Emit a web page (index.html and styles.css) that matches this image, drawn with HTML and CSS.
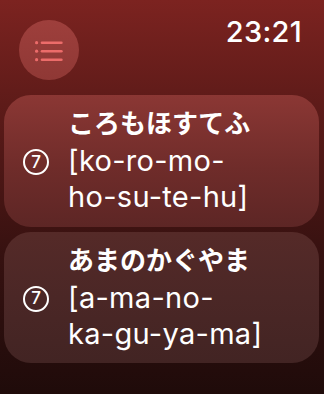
FILE: index.html
```html
<!DOCTYPE html>
<html lang="ja">
<head>
<meta charset="utf-8">
<link rel="stylesheet" href="styles.css">
</head>
<body>
<div class="screen">
  <header class="top">
    <div class="menu-btn">
      <svg width="30" height="22" viewBox="0 0 30 22">
        <circle cx="2.6" cy="2.7" r="1.6" fill="#ec6c6a"/>
        <circle cx="2.6" cy="11.2" r="1.6" fill="#ec6c6a"/>
        <circle cx="2.6" cy="19.7" r="1.6" fill="#ec6c6a"/>
        <rect x="6.7" y="1.5" width="22" height="2.5" rx="1.25" fill="#ec6c6a"/>
        <rect x="6.7" y="10" width="22" height="2.5" rx="1.25" fill="#ec6c6a"/>
        <rect x="6.7" y="18.5" width="22" height="2.5" rx="1.25" fill="#ec6c6a"/>
      </svg>
    </div>
    <div class="time">23:21</div>
  </header>
  <div class="list">
    <div class="card card-a">
      <div class="badge"><span>7</span></div>
      <div class="text">
        <div class="title">ころもほすてふ</div>
        <div class="romaji">[ko-ro-mo-<br>ho-su-te-hu]</div>
      </div>
    </div>
    <div class="card card-b">
      <div class="badge"><span>7</span></div>
      <div class="text">
        <div class="title">あまのかぐやま</div>
        <div class="romaji">[a-ma-no-<br>ka-gu-ya-ma]</div>
      </div>
    </div>
  </div>
</div>
</body>
</html>
```
FILE: styles.css
```css
html, body {
  margin: 0;
  padding: 0;
}
body {
  width: 324px;
  height: 394px;
  overflow: hidden;
  font-family: Inter, "Noto Sans CJK JP", sans-serif;
  color: #fff;
}
.screen {
  width: 324px;
  height: 394px;
  background: linear-gradient(180deg, #7c2320 0%, #5a1a18 30%, #361110 65%, #1f0b0a 100%);
  display: flex;
  flex-direction: column;
}
.top {
  display: flex;
  justify-content: space-between;
  align-items: flex-start;
  height: 95px;
  box-sizing: border-box;
  padding: 20px 22px 0 19px;
}
.menu-btn {
  width: 60px;
  height: 60px;
  border-radius: 50%;
  background: linear-gradient(180deg, #9e3f3c 0%, #8f3835 100%);
  display: flex;
  align-items: center;
  justify-content: center;
}
.menu-btn svg {
  margin-top: 2px;
}
.time {
  font-size: 29px;
  font-weight: 500;
  line-height: 1;
  margin-top: -3px;
  letter-spacing: 0.3px;
}
.list {
  display: flex;
  flex-direction: column;
  gap: 5px;
  padding: 0 5px 0 4px;
}
.card {
  border-radius: 27px;
  display: flex;
  align-items: flex-start;
  padding: 6px 10px 0 19px;
  box-sizing: border-box;
}
.card-a {
  height: 132px;
  background: linear-gradient(180deg, #8b3734 0%, #6f2c2a 55%, #5d2625 100%);
}
.card-b {
  height: 131px;
  background: linear-gradient(180deg, #552a28 0%, #4b2726 50%, #422423 100%);
}
.badge {
  width: 22px;
  height: 22px;
  border: 2px solid #fff;
  border-radius: 50%;
  flex: none;
  display: flex;
  align-items: center;
  justify-content: center;
  margin-right: 19px;
  align-self: center;
  margin-top: -4px;
}
.badge span {
  font-size: 17px;
  font-weight: 500;
  line-height: 1;
}
.text {
  display: flex;
  flex-direction: column;
}
.title {
  font-family: "Noto Sans CJK JP", sans-serif;
  font-weight: 700;
  font-size: 26px;
  line-height: 42px;
}
.romaji {
  font-size: 29px;
  line-height: 36px;
  font-weight: 400;
  letter-spacing: 0.3px;
}
```
